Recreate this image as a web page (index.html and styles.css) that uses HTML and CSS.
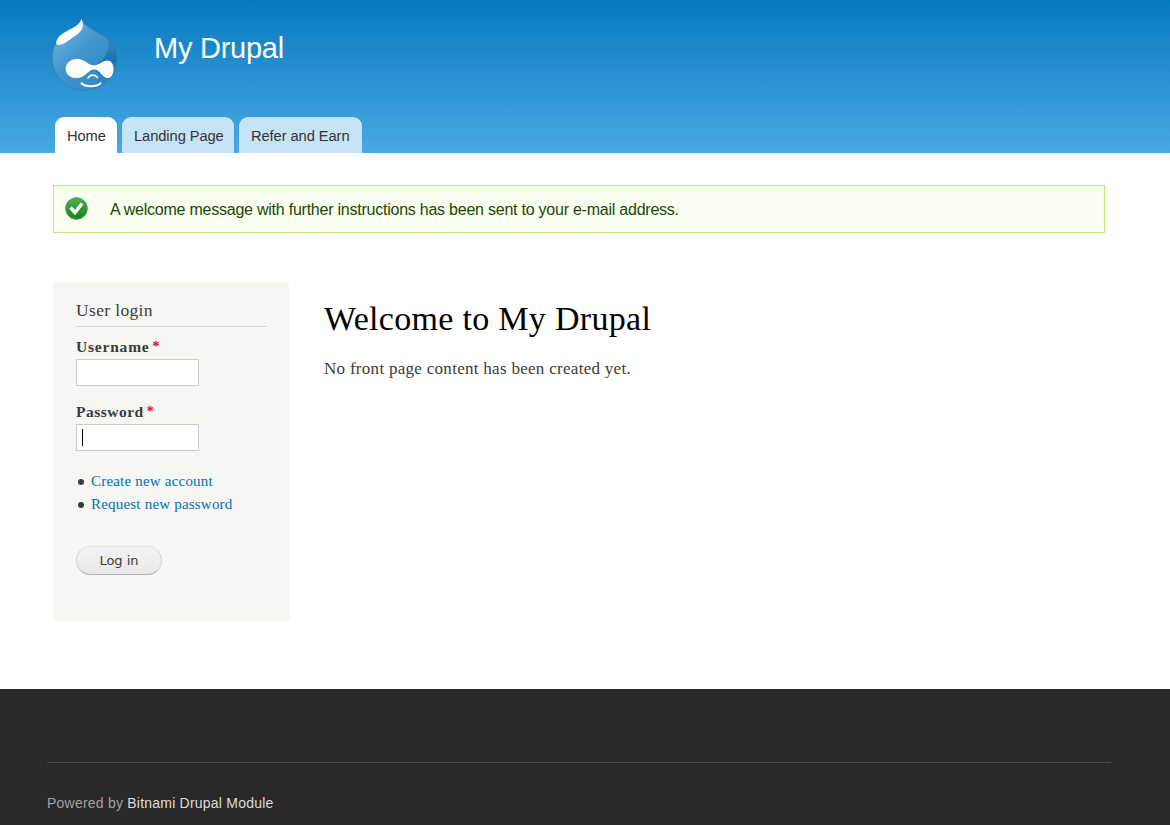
FILE: index.html
```html
<!DOCTYPE html>
<html lang="en">
<head>
<meta charset="utf-8">
<title>My Drupal</title>
<link rel="stylesheet" href="styles.css">
</head>
<body>
<header class="header">
  <div class="branding">
    <svg class="logo" width="90" height="90" viewBox="0 0 90 90">
      <defs>
        <linearGradient id="drop" x1="0" y1="0" x2="1" y2="1">
          <stop offset="0" stop-color="#7dbbe4"/><stop offset=".45" stop-color="#4296cf"/><stop offset="1" stop-color="#2a83bf"/>
        </linearGradient>
        <linearGradient id="shine" x1="1" y1="0" x2="0" y2="1">
          <stop offset="0" stop-color="#e4f1fa"/><stop offset=".3" stop-color="#fff"/><stop offset=".8" stop-color="#fff"/><stop offset="1" stop-color="#cfe6f6"/>
        </linearGradient>
        <linearGradient id="shade" x1="0" y1="0" x2="0" y2="1">
          <stop offset="0" stop-color="#0b67a8" stop-opacity=".1"/><stop offset=".5" stop-color="#0b67a8" stop-opacity=".7"/><stop offset="1" stop-color="#0b67a8" stop-opacity=".2"/>
        </linearGradient>
        <clipPath id="shape"><path d="M41.500 8c1.500 6 7 9 13 12.500C67 27 76.500 34 76.500 48c0 19-15 32-32.500 32S12 66 12 48c0-12 6-20 16-27 7-4 12-6 13.500-13z"/></clipPath>
      </defs>
      <path d="M41.500 8c1.500 6 7 9 13 12.500C67 27 76.500 34 76.500 48c0 19-15 32-32.500 32S12 66 12 48c0-12 6-20 16-27 7-4 12-6 13.500-13z" fill="url(#drop)" stroke="#3277a5" stroke-width=".8"/>
      <g clip-path="url(#shape)">
        <path d="M67 27c4 13 0 21-14 30l7 9-10 15c18 0 27-14 27-33 0-9-4-16-10-21z" fill="url(#shade)"/>
        <path d="M12 55c6 8 18 11 34 11 13 0 21-5 30-15v30H12z" fill="#3d92cd" opacity=".4"/>
      </g>
      <path d="M41.500 9c1.500 4 2 6 1 8.500-2 5.500-7 8-12.500 12-4 3-8.500 6-12 5.500-3.500-.8-1.500-5 .5-7.500C25 19.500 39 18 41.500 9z" fill="url(#shine)"/>
      <path d="M36.500 49c8-.5 11 6 17 6.500 6-.5 9-5 14-5 8.500 0 7.500 17.500.5 17.500-6 0-8-8.500-14-8.500-6 0-8 8.500-18 8.500-13.500 0-14-18.500.5-19z" fill="#fff"/>
      <path d="M48 68c2-3.800 7-3.800 9.500-.5" fill="none" stroke="#fff" stroke-width="1.600" stroke-linecap="round"/>
      <path d="M41.500 73.300c4 4 15 4 19 0" fill="none" stroke="#fff" stroke-width="2" stroke-linecap="round"/>
    </svg>
    <div class="site-name">My Drupal</div>
  </div>
  <nav class="tabs">
    <a class="tab active">Home</a><a class="tab">Landing Page</a><a class="tab">Refer and Earn</a>
  </nav>
</header>
<div class="status">
  <svg class="check" width="24" height="24" viewBox="0 0 24 24">
    <defs><linearGradient id="green" x1="0" y1="0" x2="0" y2="1"><stop offset="0" stop-color="#50b052"/><stop offset=".5" stop-color="#329a34"/><stop offset="1" stop-color="#158318"/></linearGradient></defs>
    <circle cx="11.500" cy="11.500" r="10.800" fill="url(#green)" stroke="#55955a" stroke-width="1"/>
    <path d="M5.500 10.500l4.500 5 7-9" fill="none" stroke="#fff" stroke-width="3.400"/>
  </svg>
  <span class="status-text">A welcome message with further instructions has been sent to your e-mail address.</span>
</div>
<div class="main">
  <aside class="sidebar">
    <h2 class="block-title">User login</h2>
    <label class="label">Username <b class="required">*</b></label>
    <div class="field"></div>
    <label class="label second">Password <b class="required">*</b></label>
    <div class="field"><i class="caret"></i></div>
    <ul class="links">
      <li><a>Create new account</a></li>
      <li><a>Request new password</a></li>
    </ul>
    <button class="button">Log in</button>
  </aside>
  <main class="content">
    <h1 class="title">Welcome to My Drupal</h1>
    <p class="empty">No front page content has been created yet.</p>
  </main>
</div>
<footer class="footer">
  <div class="powered">Powered by <a>Bitnami Drupal Module</a></div>
</footer>
</body>
</html>
```
FILE: styles.css
```css
* { box-sizing: border-box; }
body { margin: 0; height: 825px; overflow: hidden; display: flex; flex-direction: column; background: #fff; color: #3b3b3b; font-family: Georgia, "Liberation Serif", serif; }
.header { height: 153px; flex: none; background: linear-gradient(#0779bf, #48a9e4); font-family: "Liberation Sans", Arial, sans-serif; display: flex; flex-direction: column; justify-content: space-between; }
.branding { display: flex; padding: 10px 0 0 40px; }
.logo { display: block; }
.site-name { color: #fff; font-size: 29px; letter-spacing: -.25px; line-height: 34px; margin: 21px 0 0 24px; white-space: nowrap; }
.tabs { display: flex; gap: 5px; padding-left: 55px; height: 36px; }
.tab { background: #c7e3f6; border-radius: 9px 9px 0 0; padding: 0 12px; font-size: 14.700px; letter-spacing: -.08px; line-height: 38px; color: #333; white-space: nowrap; }
.tab:nth-child(1) { width: 62px; }
.tab:nth-child(2) { width: 112px; }
.tab:nth-child(3) { width: 123px; }
.tab.active { background: #fff; }
.status { flex: none; width: 1052px; height: 48px; margin: 32px 0 0 53px; border: 1px solid #be7; background: #f8fff0; display: flex; padding: 11px; font-family: "Liberation Sans", Arial, sans-serif; font-size: 16px; line-height: 26px; color: #234600; }
.status-text { margin-left: 21px; letter-spacing: -.235px; white-space: nowrap; }
.main { display: flex; padding: 49px 0 0 53px; flex: 1; align-items: flex-start; }
.sidebar { width: 237px; height: 339px; background: #f6f6f2; border: 1px solid #f9f9f9; padding: 15px 22px 0; }
.block-title { margin: 0 0 8px; height: 29px; border-bottom: 1px solid #d6d6d6; font-weight: normal; font-size: 17.500px; letter-spacing: .35px; line-height: 25px; }
.label { display: flex; gap: 3px; height: 24px; font-size: 15.500px; letter-spacing: .8px; line-height: 24px; font-weight: bold; }
.required { color: #f00; font-size: 14px; }
.label.second { margin-top: 14px; letter-spacing: .5px; }
.field { width: 123px; height: 27px; background: #fff; border: 1px solid #ccc; padding: 4px 5px; }
.caret { display: block; width: 1px; height: 17px; background: #000; }
.links { list-style: none; margin: 19px 0 0; padding: 0; font-size: 15px; letter-spacing: .2px; line-height: 23px; }
.links li { display: flex; align-items: center; height: 23px; padding-left: 2px; }
.links li::before { content: ""; width: 6px; height: 6px; border-radius: 50%; background: #3b3b3b; margin-right: 7px; }
.links a { color: #0071b3; }
.button { display: block; width: 86px; height: 29px; margin-top: 30px; padding: 0; border: 1px solid #e4e4e4; border-bottom-color: #b4b4b4; border-left-color: #d2d2d2; border-right-color: #d2d2d2; border-radius: 15px; background: linear-gradient(#f3f3f3, #e8e8e8); color: #3a3a3a; font: 13px "DejaVu Sans", Verdana, sans-serif; }
.content { padding: 15px 0 0 34px; }
.title { margin: 0; font-weight: normal; font-size: 34px; letter-spacing: .3px; line-height: 44px; color: #000; white-space: nowrap; }
.empty { margin: 16px 0 0; font-size: 17px; letter-spacing: .29px; line-height: 24px; white-space: nowrap; }
.footer { height: 136px; flex: none; background: #292929; padding: 73px 59px 0 47px; font-family: "Liberation Sans", Arial, sans-serif; }
.powered { border-top: 1px solid #484848; padding-top: 30px; font-size: 14px; line-height: 20px; color: #a3a3a3; letter-spacing: .22px; }
.powered a { color: #ddd; }
```
